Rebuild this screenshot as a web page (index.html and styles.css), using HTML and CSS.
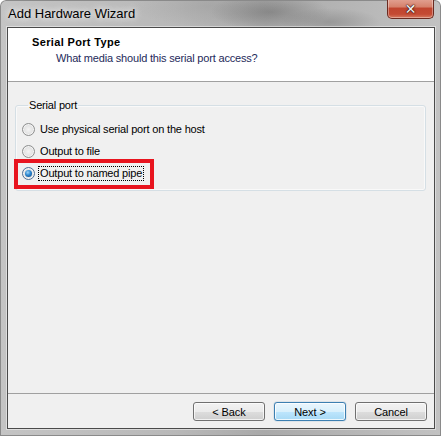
FILE: index.html
```html
<!DOCTYPE html>
<html>
<head>
<meta charset="utf-8">
<title>Add Hardware Wizard</title>
<link rel="stylesheet" href="styles.css">
</head>
<body>
<div class="window">
  <div class="titlebar">
    <span class="title">Add Hardware Wizard</span>
    <span class="close"><span class="close-x">✕</span></span>
  </div>
  <div class="client">
    <div class="header">
      <div class="h-title">Serial Port Type</div>
      <div class="h-sub">What media should this serial port access?</div>
    </div>
    <div class="body">
      <fieldset class="group">
        <legend class="group-label">Serial port</legend>
        <div class="row"><span class="radio"></span><span class="label">Use physical serial port on the host</span></div>
        <div class="row"><span class="radio"></span><span class="label">Output to file</span></div>
        <div class="row selected"><span class="radio checked"></span><span class="label focus">Output to named pipe</span><span class="highlight"></span></div>
      </fieldset>
    </div>
    <div class="footer">
      <button class="btn">&lt; Back</button>
      <button class="btn default">Next &gt;</button>
      <button class="btn">Cancel</button>
    </div>
  </div>
</div>
</body>
</html>
```
FILE: styles.css
```css
html, body {
  margin: 0;
  padding: 0;
  background: #ffffff;
}
.window {
  position: relative;
  width: 441px;
  height: 436px;
  box-sizing: border-box;
  padding: 0 6px 7px 7px;
  display: flex;
  flex-direction: column;
  border-radius: 6px 6px 0 0;
  font-family: "Liberation Sans", Arial, sans-serif;
  font-size: 11px;
  letter-spacing: -0.18px;
  color: #000;
  background:
    radial-gradient(ellipse 60px 18px at 270px 12px, rgba(110,110,110,0.55), rgba(110,110,110,0) 100%),
    radial-gradient(ellipse 50px 14px at 330px 22px, rgba(120,120,120,0.45), rgba(120,120,120,0) 100%),
    radial-gradient(ellipse 80px 20px at 210px 6px, rgba(150,150,150,0.4), rgba(150,150,150,0) 100%),
    linear-gradient(to right, #c4c4c4 0%, #b8b8b8 40%, #a9a9a9 60%, #b6b6b6 80%, #c2c2c2 100%);
  box-shadow: inset 0 0 0 1px #8a8a8a;
}
.titlebar {
  height: 27px;
  display: flex;
  align-items: center;
  padding-left: 1px;
}
.title {
  font-family: "Liberation Sans", Arial, sans-serif;
  font-size: 13px;
  letter-spacing: 0;
  margin-top: -1px;
  color: #000;
  text-shadow: 0 0 6px rgba(255,255,255,0.9), 0 0 10px rgba(255,255,255,0.7);
}
.close {
  position: absolute;
  left: 387px;
  top: -1px;
  width: 47px;
  height: 20px;
  box-sizing: border-box;
  border: 1px solid #6b2a20;
  border-top: none;
  border-radius: 0 0 5px 5px;
  background: linear-gradient(to bottom, #e2a293 0%, #d6826d 40%, #c0452f 50%, #c44a33 80%, #d67a60 100%);
  box-shadow: inset 0 0 0 1px rgba(255,255,255,0.35);
  display: flex;
  align-items: center;
  justify-content: center;
}
.close-x {
  font-family: "DejaVu Sans", sans-serif;
  font-weight: bold;
  font-size: 14px;
  line-height: 1;
  letter-spacing: 0;
  color: #f4f4f4;
  text-shadow: 0 0 1px #3a1510, 0 0 1px #3a1510, 0 0 2px #3a1510;
}
.client {
  flex: 1;
  display: flex;
  flex-direction: column;
  border: 1px solid #4a4a4a;
  background: #f0f0f0;
  box-shadow: 0 0 0 1px rgba(255,255,255,0.45);
}
.header {
  height: 54px;
  box-sizing: border-box;
  background: #ffffff;
  border-bottom: 1px solid #a0a0a0;
  padding: 8px 0 0 24px;
  line-height: 13px;
}
.h-title {
  font-weight: bold;
  letter-spacing: 0.35px;
}
.h-sub {
  margin: 3px 0 0 24px;
  color: #1e2a5a;
}
.body {
  flex: 1;
  padding: 17px 8px 0 7px;
}
.group {
  margin: 0;
  padding: 6px 0 6px 6px;
  border: 1px solid #d5dfe5;
  border-radius: 3px;
  box-shadow: inset 0 0 0 1px rgba(255,255,255,0.6);
  min-width: 0;
}
.group-label {
  margin-left: 6px;
  padding: 0 1px;
  line-height: 13px;
  color: #000;
}
.row {
  position: relative;
  height: 22px;
  display: flex;
  align-items: center;
  gap: 3px;
  line-height: 13px;
}
.radio {
  width: 13px;
  height: 13px;
  box-sizing: border-box;
  border-radius: 50%;
  border: 1px solid #8e8f8f;
  background: radial-gradient(circle at 50% 50%, #f4f4f4 0%, #e6e6e6 45%, #d2d2d2 100%);
  box-shadow: inset 0 0 0 1px #f4f4f4;
  position: relative;
  flex: none;
}
.radio.checked {
  border-color: #4e6f96;
}
.radio.checked::after {
  content: "";
  position: absolute;
  left: 2px;
  top: 2px;
  width: 7px;
  height: 7px;
  border-radius: 50%;
  background: radial-gradient(circle at 40% 35%, #9fd4f7 0%, #2a86cf 45%, #0b3f7c 100%);
}
.label {
  padding: 0 1px;
  border: 1px dotted transparent;
}
.label.focus {
  border-color: #000;
}
.highlight {
  position: absolute;
  left: -8px;
  top: -3px;
  width: 140px;
  height: 30px;
  box-sizing: border-box;
  border: 4px solid #e8141e;
  pointer-events: none;
}
.footer {
  height: 35px;
  box-sizing: border-box;
  border-top: 1px solid #a0a0a0;
  display: flex;
  justify-content: flex-end;
  align-items: flex-start;
  gap: 9px;
  padding: 8px 7px 0 0;
}
.btn {
  width: 72px;
  height: 19px;
  box-sizing: border-box;
  padding: 0;
  font-family: "Liberation Sans", Arial, sans-serif;
  font-size: 11px;
  letter-spacing: -0.1px;
  color: #000;
  border: 1px solid #707070;
  border-radius: 3px;
  background: linear-gradient(to bottom, #f2f2f2 0%, #ebebeb 50%, #dddddd 51%, #cfcfcf 100%);
  box-shadow: inset 0 0 0 1px rgba(255,255,255,0.7);
}
.btn.default {
  border-color: #3c7fb1;
  background: linear-gradient(to bottom, #eaf6fd 0%, #d9f0fc 50%, #bee6fd 51%, #a7d9f5 100%);
  box-shadow: inset 0 0 0 1px rgba(255,255,255,0.8), 0 0 1px #3c7fb1;
}
```
